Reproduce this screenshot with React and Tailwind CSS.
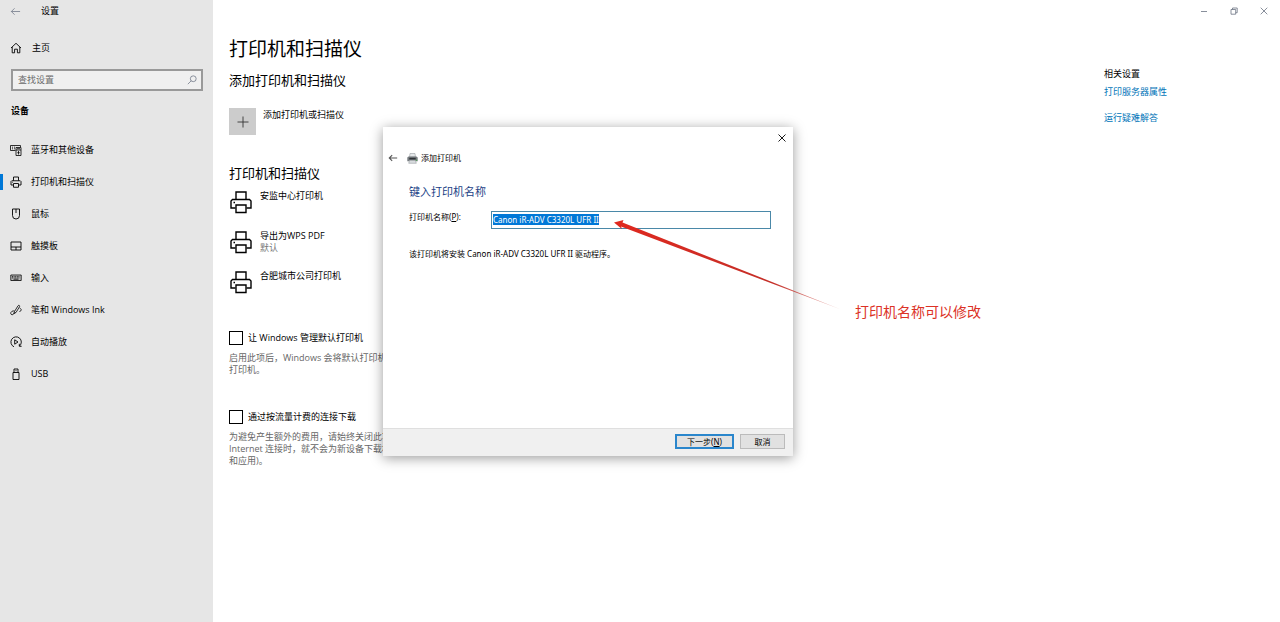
import React, { useEffect, useRef, useState } from 'react';

const Icon = ({ className = 'size-3', box = 12, width = 0.9, children }) => (
  <svg
    className={`shrink-0 ${className}`}
    viewBox={`0 0 ${box} ${box}`}
    fill="none"
    stroke="currentColor"
    strokeWidth={width}
    aria-hidden="true"
  >
    {children}
  </svg>
);

const BackIcon = ({ className, width }) => (
  <Icon className={className} width={width}>
    <path d="M11 6H1.5M5 2.5 1.5 6 5 9.5" />
  </Icon>
);

const HomeIcon = () => (
  <Icon>
    <path d="M1 6 6 1.3 11 6M2.2 5v5.8h2.4V7.2h2.8v3.6h2.4V5" />
  </Icon>
);

const DevicesIcon = () => (
  <Icon width={0.8}>
    <path d="M5.5 6.5h-5v-5h10v1.500M2 3.200h1M4 3.200h1M2 4.800h1M4 4.800h1" />
    <path d="M6 3.500h5v8H6zM6 6h5M8.500 7v3.500M7.300 8.700h2.400M7 4.700h3" />
  </Icon>
);

const PrinterIcon = ({ className = 'size-3', width = 1.8 }) => (
  <Icon className={className} box={24} width={width}>
    <path d="M7 9.500V2h10v7.500M6.500 18H2v-7l1.500-1.500h17L22 11v7h-4.500" />
    <path d="M7 15h10v7.500H7z" />
    <path d="M4.500 12.500h1.500" />
  </Icon>
);

const MouseIcon = () => (
  <Icon>
    <path d="M2.500 1h7v6.500a3.500 3.500 0 0 1-7 0zM6 1v4" />
  </Icon>
);

const TouchpadIcon = () => (
  <Icon>
    <path d="M1 2h10v8H1zM1 7h10M6 7v3" />
  </Icon>
);

const KeyboardIcon = () => (
  <Icon width={0.8}>
    <path d="M.8 3h10.400v5.500H.8z" fill="currentColor" fillOpacity=".15" />
    <path d="M2 4.600h8M2 5.900h8" strokeDasharray="1 .6" />
    <path d="M3.500 7.200h5" />
  </Icon>
);

const PenIcon = () => (
  <Icon width={0.8}>
    <path d="M4.500 7.500 8 1.800c.8-1 2-.3 1.600.8L6 8.500l-2.200 1zM9.600 4l1.900 1.700L9.500 8" />
    <path d="M4.500 7C2.500 6.500.7 7.800.7 9.300s2.300 2 3 .6L5 8.500" />
  </Icon>
);

const AutoplayIcon = () => (
  <Icon>
    <path d="M4 10.800A5.200 5.200 0 1 1 9.500 10M9.300 7.800v2.500h2.300" />
    <path d="M4.700 3.800v4.400L8 6z" />
  </Icon>
);

const UsbIcon = () => (
  <Icon>
    <path d="M3 4.500h6v7H3zM4 4.500V1h4v3.500M5.500 2.700h1" />
  </Icon>
);

const navItems = [
  { label: '蓝牙和其他设备', icon: DevicesIcon },
  { label: '打印机和扫描仪', icon: PrinterIcon, active: true },
  { label: '鼠标', icon: MouseIcon },
  { label: '触摸板', icon: TouchpadIcon },
  { label: '输入', icon: KeyboardIcon },
  { label: '笔和 Windows Ink', icon: PenIcon },
  { label: '自动播放', icon: AutoplayIcon },
  { label: 'USB', icon: UsbIcon },
];

const printers = [
  { name: '安监中心打印机' },
  { name: '导出为WPS PDF', status: '默认' },
  { name: '合肥城市公司打印机' },
];

function Sidebar() {
  return (
    <aside className="w-[213px] shrink-0 bg-[#e6e6e6]">
      <div className="flex h-[22px] items-center gap-5 pl-[10px]">
        <button type="button" aria-label="返回" className="text-gray-500">
          <BackIcon className="size-[11px]" width={0.8} />
        </button>
        <span>设置</span>
      </div>

      <a href="#home" className="mt-4 flex h-5 items-center gap-[10px] pl-[10px]">
        <HomeIcon />
        主页
      </a>

      <div className="mr-[10px] ml-[11px] mt-[11px] flex h-[22px] items-center border-2 border-[#999] bg-[#f0f0f0] pr-1 pl-[5px]">
        <input
          type="search"
          aria-label="查找设置"
          placeholder="查找设置"
          className="min-w-0 flex-1 bg-transparent outline-none placeholder:text-[#6b6b6b]"
        />
        <Icon className="size-[10px] text-gray-500">
          <circle cx="7.5" cy="4.5" r="3.5" />
          <path d="M5 7 1 11" />
        </Icon>
      </div>

      <h2 className="mt-2 flex h-6 items-center pl-[11px] font-bold">设备</h2>

      <nav className="mt-[11px]">
        {navItems.map(({ label, icon: NavIcon, active }) => (
          <a key={label} href="#nav" className="flex h-8 items-center">
            <span className={active ? 'h-4 w-[3px] bg-[#0078d7]' : 'h-4 w-[3px]'} />
            <span className="mr-[9px] ml-[7px]">
              <NavIcon />
            </span>
            {label}
          </a>
        ))}
      </nav>
    </aside>
  );
}

function WindowControls() {
  return (
    <div className="flex h-[22px] justify-end pr-px text-gray-500">
      <button type="button" aria-label="最小化" className="flex w-[30px] items-center justify-center">
        <Icon className="size-2" box={8} width={0.8}>
          <path d="M1 4.500h6" />
        </Icon>
      </button>
      <button type="button" aria-label="还原" className="flex w-[30px] items-center justify-center">
        <Icon className="size-2" box={8} width={0.8}>
          <path d="M1 2.500h4.700v4.700H1zM2.500 2.500V1h4.700v4.700H5.700" />
        </Icon>
      </button>
      <button type="button" aria-label="关闭" className="flex w-[30px] items-center justify-center">
        <Icon className="size-2" box={8} width={0.8}>
          <path d="m.7.7 6.600 6.600M7.300.7.7 7.300" />
        </Icon>
      </button>
    </div>
  );
}

function Option({ label, className, children }) {
  return (
    <div className={className}>
      <label className="flex items-center gap-[5px]">
        <input type="checkbox" className="size-[14px] appearance-none border border-black bg-white" />
        {label}
      </label>
      <p className="mt-[7px] whitespace-nowrap text-[#666]">{children}</p>
    </div>
  );
}

function PrinterSettings() {
  return (
    <main className="pl-4">
      <h1 className="mt-[15px] text-[19px] leading-6">打印机和扫描仪</h1>
      <h2 className="mt-[9px] text-[13px] leading-5">添加打印机和扫描仪</h2>
      <button type="button" className="mt-[18px] flex items-start gap-[7px] leading-[14px]">
        <span className="flex size-[27px] items-center justify-center bg-[#ccc] text-[#333]">
          <Icon>
            <path d="M6 .5v11M.5 6h11" />
          </Icon>
        </span>
        添加打印机或扫描仪
      </button>

      <h2 className="mt-7 text-[13px] leading-5">打印机和扫描仪</h2>
      <ul className="mt-[7px]">
        {printers.map((p) => (
          <li key={p.name} className="flex h-10 items-start gap-[7px]">
            <PrinterIcon className="size-6" width={1.4} />
            <div>
              <div>{p.name}</div>
              {p.status && <div className="text-[#777]">{p.status}</div>}
            </div>
          </li>
        ))}
      </ul>

      <Option className="mt-[21px]" label="让 Windows 管理默认打印机">
        启用此项后，Windows 会将默认打印机设置为你
        <br />
        打印机。
      </Option>
      <Option className="mt-[34px]" label="通过按流量计费的连接下载">
        为避免产生额外的费用，请始终关闭此功能
        <br />
        Internet 连接时，就不会为新设备下载相关软件
        <br />
        和应用)。
      </Option>
    </main>
  );
}

function AddPrinterDialog() {
  const [name, setName] = useState('Canon iR-ADV C3320L UFR II');
  const inputRef = useRef(null);

  useEffect(() => {
    inputRef.current.focus();
    inputRef.current.select();
  }, []);

  return (
    <div
      role="dialog"
      aria-label="添加打印机"
      className="absolute top-[127px] left-[383px] w-[410px] bg-white font-['Noto_Sans','Noto_Sans_CJK_SC',sans-serif] text-[8px] shadow-[0_2px_12px_rgba(0,0,0,0.4)]"
    >
      <div className="flex h-[21px] items-center justify-end pr-[7px]">
        <button type="button" aria-label="关闭">
          <Icon className="size-2" box={8}>
            <path d="m.5.5 7 7M7.500.5l-7 7" />
          </Icon>
        </button>
      </div>
      <div className="flex h-5 items-center pl-[5px]">
        <button type="button" aria-label="返回" className="mr-[9px] text-[#555]">
          <BackIcon className="size-[10px]" width={1.3} />
        </button>
        <svg className="mr-[3px] size-[11px]" viewBox="0 0 11 11" aria-hidden="true">
          <path d="M2.500 4 3 .5h5l.5 3.500z" fill="#e4e7e9" stroke="#9a9fa3" strokeWidth=".6" />
          <path d="M.3 4.500 1.500 3.500h8l1.200 1v3.700H.3z" fill="#777c80" />
          <path d="M2.300 4.800h6.400v1.700H2.300z" fill="#2f3336" />
          <path d="M2.500 7.300h6l.8 3h-7.600z" fill="#d8dcde" stroke="#8b9094" strokeWidth=".5" />
          <circle cx="9.500" cy="7.200" r=".6" fill="#4caf50" />
        </svg>
        添加打印机
      </div>

      <div className="min-h-[260px] pt-4 pr-[22px] pl-[26px]">
        <h2 className="text-[11px] leading-4 text-[#1c3f86]">键入打印机名称</h2>
        <div className="mt-[11px] flex items-start">
          <label htmlFor="printer-name" className="w-[82px]">
            打印机名称(<u>P</u>):
          </label>
          <input
            id="printer-name"
            ref={inputRef}
            value={name}
            onChange={(e) => setName(e.target.value)}
            className="h-[18px] min-w-0 flex-1 border border-[#4a88a8] px-px pb-[2px] outline-none selection:bg-[#0078d7] selection:text-white"
          />
        </div>
        <p className="mt-[19px]">该打印机将安装 Canon iR-ADV C3320L UFR II 驱动程序。</p>
      </div>

      <div className="flex h-7 items-start justify-end gap-[6px] border-t border-[#dfdfdf] bg-[#f0f0f0] pt-[5px] pr-2">
        <button type="button" className="h-[15px] w-[59px] border-2 border-[#2a86cc] bg-[#e1e1e1] leading-[11px]">
          下一步(<u>N</u>)
        </button>
        <button type="button" className="h-[15px] w-[45px] border border-[#bbb] bg-[#e1e1e1]">
          取消
        </button>
      </div>
    </div>
  );
}

function Callout() {
  return (
    <div className="pointer-events-none absolute top-[216px] left-[612px] flex h-[106px] items-end gap-3 text-[#dc3226]">
      <svg className="h-[96px] w-[231px] self-start" viewBox="0 0 231 96" aria-hidden="true">
        <defs>
          <linearGradient id="tail" x1="0" x2="1">
            <stop offset="0" stopColor="#e0281e" />
            <stop offset=".7" stopColor="#c42f28" />
            <stop offset="1" stopColor="#c42f28" stopOpacity=".3" />
          </linearGradient>
        </defs>
        <path d="M2 6.500 11.500 4l-1 2.500L229 93.500 9 10.500l1.200 2.800z" fill="url(#tail)" />
      </svg>
      <span className="text-[14px] leading-5 whitespace-nowrap">打印机名称可以修改</span>
    </div>
  );
}

export default function App() {
  return (
    <div className="relative flex min-h-screen bg-white font-['Open_Sans','Noto_Sans_CJK_SC',sans-serif] text-[9px] leading-3 text-black">
      <Sidebar />
      <div className="flex-1">
        <WindowControls />
        <div className="flex justify-between">
          <PrinterSettings />
          <aside className="w-[176px] pt-[46px]">
            <h2>相关设置</h2>
            <a href="#server" className="mt-[6px] block text-[#0074b8]">打印服务器属性</a>
            <a href="#troubleshoot" className="mt-[14px] block text-[#0074b8]">运行疑难解答</a>
          </aside>
        </div>
      </div>
      <AddPrinterDialog />
      <Callout />
    </div>
  );
}
